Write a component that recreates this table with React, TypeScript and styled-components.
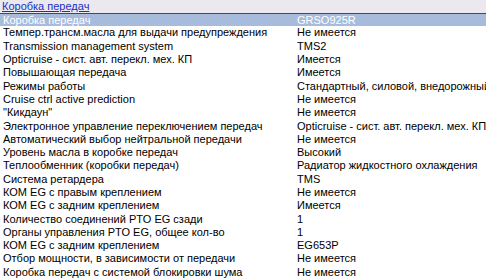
import React from "react";
import styled, { createGlobalStyle } from "styled-components";

const rows: [string, string][] = [
  ["Коробка передач", "GRSO925R"],
  ["Темпер.трансм.масла для выдачи предупреждения", "Не имеется"],
  ["Transmission management system", "TMS2"],
  ["Opticruise - сист. авт. перекл. мех. КП", "Имеется"],
  ["Повышающая передача", "Имеется"],
  ["Режимы работы", "Стандартный, силовой, внедорожный"],
  ["Cruise ctrl active prediction", "Не имеется"],
  ["\"Кикдаун\"", "Не имеется"],
  ["Электронное управление переключением передач", "Opticruise - сист. авт. перекл. мех. КП"],
  ["Автоматический выбор нейтральной передачи", "Не имеется"],
  ["Уровень масла в коробке передач", "Высокий"],
  ["Теплообменник (коробки передач)", "Радиатор жидкостного охлаждения"],
  ["Система ретардера", "TMS"],
  ["КОМ EG с правым креплением", "Не имеется"],
  ["КОМ EG с задним креплением", "Имеется"],
  ["Количество соединений PTO EG сзади", "1"],
  ["Органы управления PTO EG, общее кол-во", "1"],
  ["КОМ EG с задним креплением", "EG653P"],
  ["Отбор мощности, в зависимости от передачи", "Не имеется"],
  ["Коробка передач с системой блокировки шума", "Не имеется"],
];

export default function App() {
  return (
    <>
      <GlobalStyle />
      <Panel>
        <Header>
          <GroupLink href="#">Коробка передач</GroupLink>
        </Header>
        {rows.map(([label, value], i) => (
          <Row key={i} $selected={i === 0}>
            <Label>{label}</Label>
            <Value>{value}</Value>
          </Row>
        ))}
      </Panel>
    </>
  );
}

const GlobalStyle = createGlobalStyle`
  html, body {
    margin: 0;
    padding: 0;
    background: #ffffff;
    overflow: hidden;
  }
  body {
    font-family: "Liberation Sans", Arial, sans-serif;
    font-size: 11px;
    color: #000000;
  }
`;

const Panel = styled.div`
  width: 486px;
  height: 278px;
  overflow: hidden;
  display: flex;
  flex-direction: column;
`;

const Header = styled.div`
  height: 13px;
  flex-shrink: 0;
  background: #ebe9ed;
  padding-left: 2px;
  display: flex;
  align-items: center;
`;

const GroupLink = styled.a`
  color: #1c2fc4;
  text-decoration: underline;
  line-height: 13px;
`;

const Row = styled.div<{ $selected?: boolean }>`
  height: 13.3px;
  flex-shrink: 0;
  display: grid;
  grid-template-columns: 295px 1fr;
  align-items: center;
  white-space: nowrap;
  box-sizing: border-box;
  line-height: 13px;
  background: ${(p) => (p.$selected ? "#a7bcdd" : "transparent")};
  color: ${(p) => (p.$selected ? "#ffffff" : "#000000")};
  border-top: ${(p) => (p.$selected ? "1px solid #3c4a66" : "none")};
`;

const Label = styled.span`
  padding-left: 3px;
  overflow: hidden;
`;

const Value = styled.span`
  padding-left: 2px;
  overflow: hidden;
`;
